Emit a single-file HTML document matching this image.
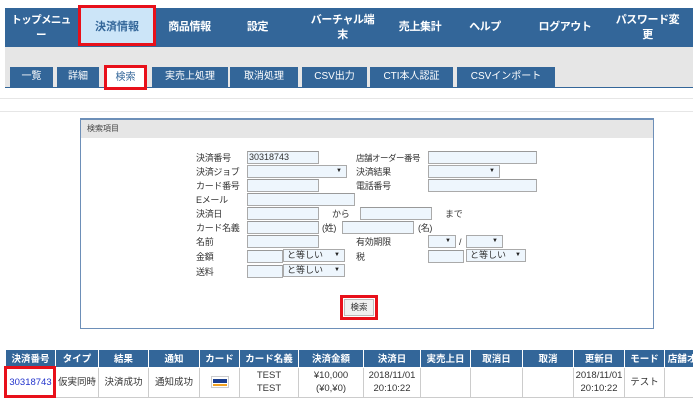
<!DOCTYPE html>
<html><head><meta charset="utf-8"><style>
*{margin:0;padding:0;box-sizing:border-box}
body{width:693px;height:403px;background:#fff;position:relative;overflow:hidden;font-family:"Liberation Sans","Noto Sans CJK JP",sans-serif;color:#333}
.a{position:absolute}
.nav{left:5px;top:8px;width:688px;height:39px;background:#336699}
.ni{position:absolute;color:#fff;font-weight:bold;font-size:11px;text-align:center;line-height:15px;top:0;height:39px;display:flex;align-items:center;justify-content:center;white-space:nowrap;letter-spacing:-0.4px}
.band{left:5px;top:47px;width:688px;height:41px;background:#e6e6e6}
.tab{position:absolute;top:67px;height:20px;background:#336699;color:#fff;font-size:10px;line-height:20px;text-align:center}
.lbl{position:absolute;font-size:9px;line-height:12px;color:#333;letter-spacing:-0.3px;white-space:nowrap}
.in{position:absolute;height:13px;background:#eef6fd;border:1px solid #aaa;border-top-color:#999;font-size:9px;line-height:11px;padding-left:1px}
.sel{position:absolute;height:13px;background:#eef6fd;border:1px solid #aaa;font-size:9px;line-height:11px;padding-left:3px}
.sel:after{content:"▼";position:absolute;right:4px;top:0;font-size:6px;color:#222}
table{border-collapse:collapse;font-size:9.5px}
th{background:#336699;color:#fff;font-weight:bold;height:17px;border:1px solid #fff;border-top:none}
td{height:30px;border:1px solid #ccc;text-align:center;line-height:13px}
</style></head><body>
<div class="a nav">
<div class="ni" style="left:3px;width:66px;font-size:10.5px;letter-spacing:-0.6px">トップメニュ<br>ー</div>
<div class="ni" style="left:152px;width:65px">商品情報</div>
<div class="ni" style="left:230px;width:45px">設定</div>
<div class="ni" style="left:300px;width:75px">バーチャル端<br>末</div>
<div class="ni" style="left:385px;width:60px">売上集計</div>
<div class="ni" style="left:455px;width:50px">ヘルプ</div>
<div class="ni" style="left:525px;width:70px">ログアウト</div>
<div class="ni" style="left:600px;width:85px">パスワード変<br>更</div>
</div>
<div class="a" style="left:78px;top:5px;width:78px;height:41px;border:3px solid #e8101a;background:#cce5f8;color:#336699;font-weight:bold;font-size:11px;display:flex;align-items:center;justify-content:center">決済情報</div>
<div class="a band"></div>
<div class="tab" style="left:10px;width:43px">一覧</div>
<div class="tab" style="left:57px;width:42px">詳細</div>
<div class="tab" style="left:152px;width:76px">実売上処理</div>
<div class="tab" style="left:230px;width:68px">取消処理</div>
<div class="tab" style="left:302px;width:65px">CSV出力</div>
<div class="tab" style="left:370px;width:83px">CTI本人認証</div>
<div class="tab" style="left:457px;width:98px">CSVインポート</div>
<div class="a" style="left:5px;top:87px;width:688px;height:1px;background:#336699"></div>
<div class="a" style="left:104px;top:65px;width:43px;height:25px;border:3px solid #e8101a;background:#fff;color:#336699;font-size:10px;line-height:19px;text-align:center">検索</div>
<div class="a" style="left:0;top:98px;width:693px;height:1px;background:#e6e6e6"></div>
<div class="a" style="left:0;top:111px;width:693px;height:1px;background:#e6e6e6"></div>

<div class="a" style="left:80px;top:118px;width:574px;height:211px;border:1px solid #6d8fb8;border-top:2px solid #6d8fb8"></div>
<div class="a" style="left:81px;top:120px;width:572px;height:18px;background:#e6e6e6;font-size:8px;line-height:18px;padding-left:6px;color:#444">検索項目</div>

<div class="lbl" style="left:196px;top:152px">決済番号</div><div class="in" style="left:247px;top:151px;width:72px">30318743</div>
<div class="lbl" style="left:196px;top:166px">決済ジョブ</div><div class="sel" style="left:247px;top:165px;width:100px"></div>
<div class="lbl" style="left:196px;top:180px">カード番号</div><div class="in" style="left:247px;top:179px;width:72px"></div>
<div class="lbl" style="left:196px;top:194px">Eメール</div><div class="in" style="left:247px;top:193px;width:108px"></div>
<div class="lbl" style="left:196px;top:208px">決済日</div><div class="in" style="left:247px;top:207px;width:72px"></div>
<div class="lbl" style="left:332px;top:208px">から</div><div class="in" style="left:360px;top:207px;width:72px"></div><div class="lbl" style="left:445px;top:208px">まで</div>
<div class="lbl" style="left:196px;top:222px">カード名義</div><div class="in" style="left:247px;top:221px;width:72px"></div>
<div class="lbl" style="left:322px;top:222px">(姓)</div><div class="in" style="left:342px;top:221px;width:72px"></div><div class="lbl" style="left:418px;top:222px">(名)</div>
<div class="lbl" style="left:196px;top:236px">名前</div><div class="in" style="left:247px;top:235px;width:72px"></div>
<div class="lbl" style="left:196px;top:251px">金額</div><div class="in" style="left:247px;top:250px;width:36px"></div><div class="sel" style="left:283px;top:249px;width:62px">と等しい</div>
<div class="lbl" style="left:196px;top:266px">送料</div><div class="in" style="left:247px;top:265px;width:36px"></div><div class="sel" style="left:283px;top:264px;width:62px">と等しい</div>

<div class="lbl" style="left:356px;top:152px;font-size:8.5px;letter-spacing:-0.5px">店舗オーダー番号</div><div class="in" style="left:428px;top:151px;width:109px"></div>
<div class="lbl" style="left:356px;top:166px">決済結果</div><div class="sel" style="left:428px;top:165px;width:72px"></div>
<div class="lbl" style="left:356px;top:180px">電話番号</div><div class="in" style="left:428px;top:179px;width:109px"></div>
<div class="lbl" style="left:356px;top:236px">有効期限</div><div class="sel" style="left:428px;top:235px;width:28px"></div><div class="lbl" style="left:459px;top:236px">/</div><div class="sel" style="left:466px;top:235px;width:37px"></div>
<div class="lbl" style="left:356px;top:251px">税</div><div class="in" style="left:428px;top:250px;width:36px"></div><div class="sel" style="left:466px;top:249px;width:60px">と等しい</div>

<div class="a" style="left:340px;top:295px;width:38px;height:25px;border:3px solid #e8101a;"><div style="margin:1px;height:17px;background:#f0f0f0;border:1px solid #bbb;font-size:8.5px;line-height:15px;text-align:center">検索</div></div>

<table class="a" style="left:5px;top:350px;width:695px">
<tr><th style="width:50px">決済番号</th><th style="width:43px">タイプ</th><th style="width:50px">結果</th><th style="width:51px">通知</th><th style="width:40px">カード</th><th style="width:59px">カード名義</th><th style="width:65px">決済金額</th><th style="width:57px">決済日</th><th style="width:50px">実売上日</th><th style="width:52px">取消日</th><th style="width:51px">取消</th><th style="width:51px">更新日</th><th style="width:40px">モード</th><th>店舗オ</th></tr>
<tr><td style="color:#2233cc">30318743</td><td>仮実同時</td><td>決済成功</td><td>通知成功</td><td><span style="display:inline-block;width:18px;height:12px;background:#fff;border:1px solid #ccc;vertical-align:middle;position:relative"><span style="position:absolute;left:1px;top:2px;width:14px;height:4px;background:#1a3d8f"></span><span style="position:absolute;left:1px;top:7px;width:14px;height:2px;background:#f0a020"></span></span></td><td>TEST<br>TEST</td><td>¥10,000<br>(¥0,¥0)</td><td>2018/11/01<br>20:10:22</td><td></td><td></td><td></td><td>2018/11/01<br>20:10:22</td><td>テスト</td><td></td></tr>
</table>
<div class="a" style="left:4px;top:366px;width:52px;height:32px;border:3px solid #e8101a"></div>
</body></html>
